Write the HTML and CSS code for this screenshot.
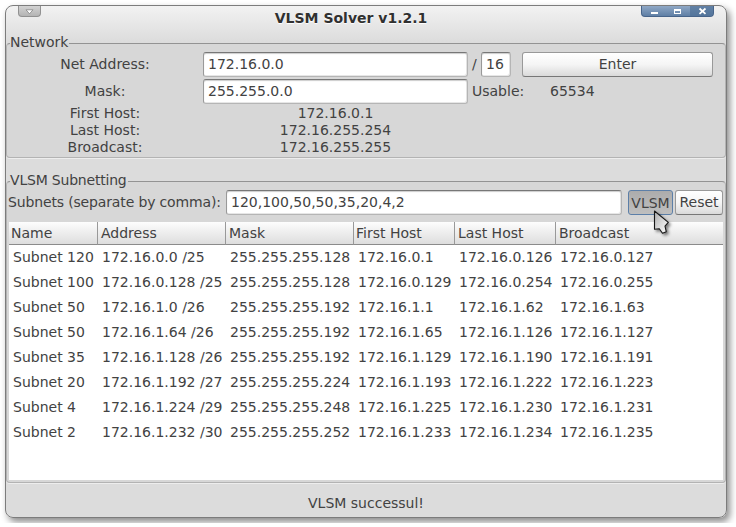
FILE: index.html
```html
<!DOCTYPE html>
<html lang="en">
<head>
<meta charset="utf-8">
<title>VLSM Solver v1.2.1</title>
<link rel="stylesheet" href="styles.css">
</head>
<body>
<main class="window">
  <header class="titlebar">
    <div class="menu-tab"><svg width="9" height="6" viewBox="0 0 9 6"><path d="M1 .8H8L4.500 4.800Z" fill="#fff" stroke="#858585" stroke-width=".8"/></svg></div>
    <h1>VLSM Solver v1.2.1</h1>
    <div class="controls">
      <svg width="73" height="12" viewBox="0 0 73 12">
        <path d="M49 0H73V12H49Z" fill="#4f7097" opacity=".7"/>
        <path d="M10 6H17V8H10Z" fill="#fff"/>
        <path fill-rule="evenodd" d="M33 3H40V8H33ZM34 5V7H39V5Z" fill="#fff"/>
        <path d="M58.500 2.500L64.500 7.800M64.500 2.500L58.500 7.800" stroke="#fff" stroke-width="1.800"/>
      </svg>
    </div>
  </header>

  <fieldset class="network">
    <legend>Network</legend>
    <div class="form">
      <span class="label">Net Address:</span>
      <div class="field">172.16.0.0</div>
      <div class="side"><span class="slash">/</span><div class="field bits">16</div><div class="button enter">Enter</div></div>
      <span class="label">Mask:</span>
      <div class="field">255.255.0.0</div>
      <div class="side"><span class="usable">Usable:</span><span class="count">65534</span></div>
    </div>
    <div class="hosts">
      <span>First Host:</span><span>172.16.0.1</span>
      <span>Last Host:</span><span>172.16.255.254</span>
      <span>Broadcast:</span><span>172.16.255.255</span>
    </div>
  </fieldset>

  <fieldset class="subnetting">
    <legend>VLSM Subnetting</legend>
    <div class="query">
      <span class="query-label">Subnets (separate by comma):</span>
      <div class="field subnets">120,100,50,50,35,20,4,2</div>
      <div class="button vlsm">VLSM
        <svg class="cursor" width="24" height="32" viewBox="0 0 24 32">
          <defs><linearGradient id="arrow" x2="1" y2="1"><stop offset="0" stop-color="#aaa"/><stop offset=".5" stop-color="#d8d8d8"/><stop offset="1" stop-color="#fff"/></linearGradient></defs>
          <path d="M2.500 2V20.300L7.300 19.700L10.500 24.200L14.300 22.800L13 17.200L16.300 13.400Z" fill="url(#arrow)" stroke="#161616" stroke-width="1.100" stroke-linejoin="round"/>
        </svg>
      </div>
      <div class="button reset">Reset</div>
    </div>
    <div class="table-pane">
      <table>
        <thead><tr><th class="c1">Name</th><th class="c2">Address</th><th class="c3">Mask</th><th class="c4">First Host</th><th class="c5">Last Host</th><th>Broadcast</th></tr></thead>
        <tbody>
          <tr><td>Subnet 120</td><td>172.16.0.0 /25</td><td>255.255.255.128</td><td>172.16.0.1</td><td>172.16.0.126</td><td>172.16.0.127</td></tr>
          <tr><td>Subnet 100</td><td>172.16.0.128 /25</td><td>255.255.255.128</td><td>172.16.0.129</td><td>172.16.0.254</td><td>172.16.0.255</td></tr>
          <tr><td>Subnet 50</td><td>172.16.1.0 /26</td><td>255.255.255.192</td><td>172.16.1.1</td><td>172.16.1.62</td><td>172.16.1.63</td></tr>
          <tr><td>Subnet 50</td><td>172.16.1.64 /26</td><td>255.255.255.192</td><td>172.16.1.65</td><td>172.16.1.126</td><td>172.16.1.127</td></tr>
          <tr><td>Subnet 35</td><td>172.16.1.128 /26</td><td>255.255.255.192</td><td>172.16.1.129</td><td>172.16.1.190</td><td>172.16.1.191</td></tr>
          <tr><td>Subnet 20</td><td>172.16.1.192 /27</td><td>255.255.255.224</td><td>172.16.1.193</td><td>172.16.1.222</td><td>172.16.1.223</td></tr>
          <tr><td>Subnet 4</td><td>172.16.1.224 /29</td><td>255.255.255.248</td><td>172.16.1.225</td><td>172.16.1.230</td><td>172.16.1.231</td></tr>
          <tr><td>Subnet 2</td><td>172.16.1.232 /30</td><td>255.255.255.252</td><td>172.16.1.233</td><td>172.16.1.234</td><td>172.16.1.235</td></tr>
        </tbody>
      </table>
    </div>
  </fieldset>
  <footer>VLSM successul!</footer>
</main>
</body>
</html>
```
FILE: styles.css
```css
* { box-sizing: border-box; }
body {
  margin: 0;
  padding: 5px;
  background: #fff;
  color: #424242;
  font: 14px/16px "DejaVu Sans", sans-serif;
  white-space: nowrap;
  overflow: hidden;
}
.window {
  width: 722px;
  height: 513px;
  border: 1px solid #7c7c7c;
  border-radius: 8px;
  background: linear-gradient(#f2f2f2, #dcdcdc 36px);
  box-shadow: 3px 4px 7px rgba(0, 0, 0, .45);
}
.titlebar {
  display: grid;
  grid-template-columns: 23px 1fr 73px;
  height: 29px;
  padding: 0 12px;
}
.titlebar h1 {
  margin: 4px 0 0 20px;
  color: #303030;
  font-size: 14px;
  line-height: 17px;
  text-align: center;
  text-shadow: 0 1px 1px #fff;
}
.menu-tab {
  display: flex;
  justify-content: center;
  width: 23px;
  height: 11px;
  padding-top: 3px;
  border: 1px solid #919191;
  border-top: 0;
  border-radius: 0 0 4px 4px;
  background: linear-gradient(#d2d2d2, #b4b4b4);
}
.menu-tab svg { flex: none; }
.controls {
  width: 73px;
  height: 11px;
  overflow: hidden;
  border-radius: 0 0 4px 4px;
  background: linear-gradient(#8fa8c6, #5f7fa5);
  border: solid #47648a;
  border-width: 0 1px 1px;
}
.controls svg {
  display: block;
  margin-left: -1px;
}
fieldset {
  min-width: 0;
  margin: 0;
  padding: 0;
  border: 1px solid #b3b3b3;
  border-top-color: #939393;
  border-radius: 4px;
  background: #d7d7d7;
  box-shadow: 0 1px #ededed;
}
legend {
  height: 16px;
  margin-left: 3px;
  padding: 0 1px 0 0;
  line-height: 15px;
}
.network { height: 123px; }
.form {
  display: grid;
  grid-template-columns: 196px 265px 1fr;
  grid-auto-rows: 25px;
  row-gap: 2px;
  align-items: center;
  padding-top: 1px;
}
.label, .hosts span { text-align: center; }
.label, .slash, .usable, .count { padding-bottom: 2px; }
.field {
  height: 25px;
  padding-left: 4px;
  border: 1px solid #b5b5b5;
  border-top-color: #777;
  border-left-color: #999;
  border-radius: 3px;
  background: #fff;
  box-shadow: inset 0 1px 1px #ccc, inset -1px -1px #e6e6e6;
  line-height: 22px;
}
.side {
  display: flex;
  align-items: center;
  padding-left: 4px;
}
.slash { width: 9px; }
.bits {
  width: 30px;
  margin-right: 11px;
}
.usable { width: 78px; }
.button {
  height: 25px;
  border: 1px solid #999;
  border-bottom-color: #777;
  border-radius: 3px;
  background: linear-gradient(#fff, #f5f5f5 50%, #dadada);
  line-height: 22px;
  text-align: center;
}
.enter { width: 191px; }
.hosts {
  display: grid;
  grid-template-columns: 196px 265px;
  grid-auto-rows: 17px;
  padding-top: 1px;
}
.subnetting {
  height: 310px;
  margin-top: 15px;
}
.subnetting legend { letter-spacing: -.2px; }
.query {
  display: flex;
  padding: 1px 2px 0 1px;
}
.query-label {
  width: 218px;
  letter-spacing: -.15px;
  line-height: 24px;
}
.subnets { width: 396px; }
.vlsm {
  position: relative;
  width: 45px;
  margin-left: 6px;
  border-color: #5c7fa8;
  background: linear-gradient(#acacac, #bfbfbf);
  line-height: 25px;
}
.cursor {
  position: absolute;
  top: 18px;
  left: 23px;
  filter: drop-shadow(2px 2px 1.5px rgba(0, 0, 0, .5));
}
.reset {
  width: 48px;
  margin-left: 2px;
}
.table-pane {
  height: 258px;
  margin: 7px 2px 0;
  background: #fff;
}
table {
  width: 100%;
  border-collapse: separate;
  border-spacing: 0;
  table-layout: fixed;
}
thead tr { background: linear-gradient(#fdfdfd, #dcdcdc); }
th {
  height: 23px;
  padding: 0 0 1px 3px;
  border-right: 1px solid #999;
  border-bottom: 1px solid #8b8b8b;
  font-weight: normal;
  text-align: left;
}
th:last-child { border-right: 0; }
.c1 {
  width: 89px;
  padding-left: 2px;
}
.c2, .c3 { width: 128px; }
.c4, .c5 { width: 101px; }
.c4 { padding-left: 2px; }
td {
  height: 25px;
  padding: 0 0 2px 4px;
}
footer {
  padding-top: 12px;
  text-align: center;
}
```
